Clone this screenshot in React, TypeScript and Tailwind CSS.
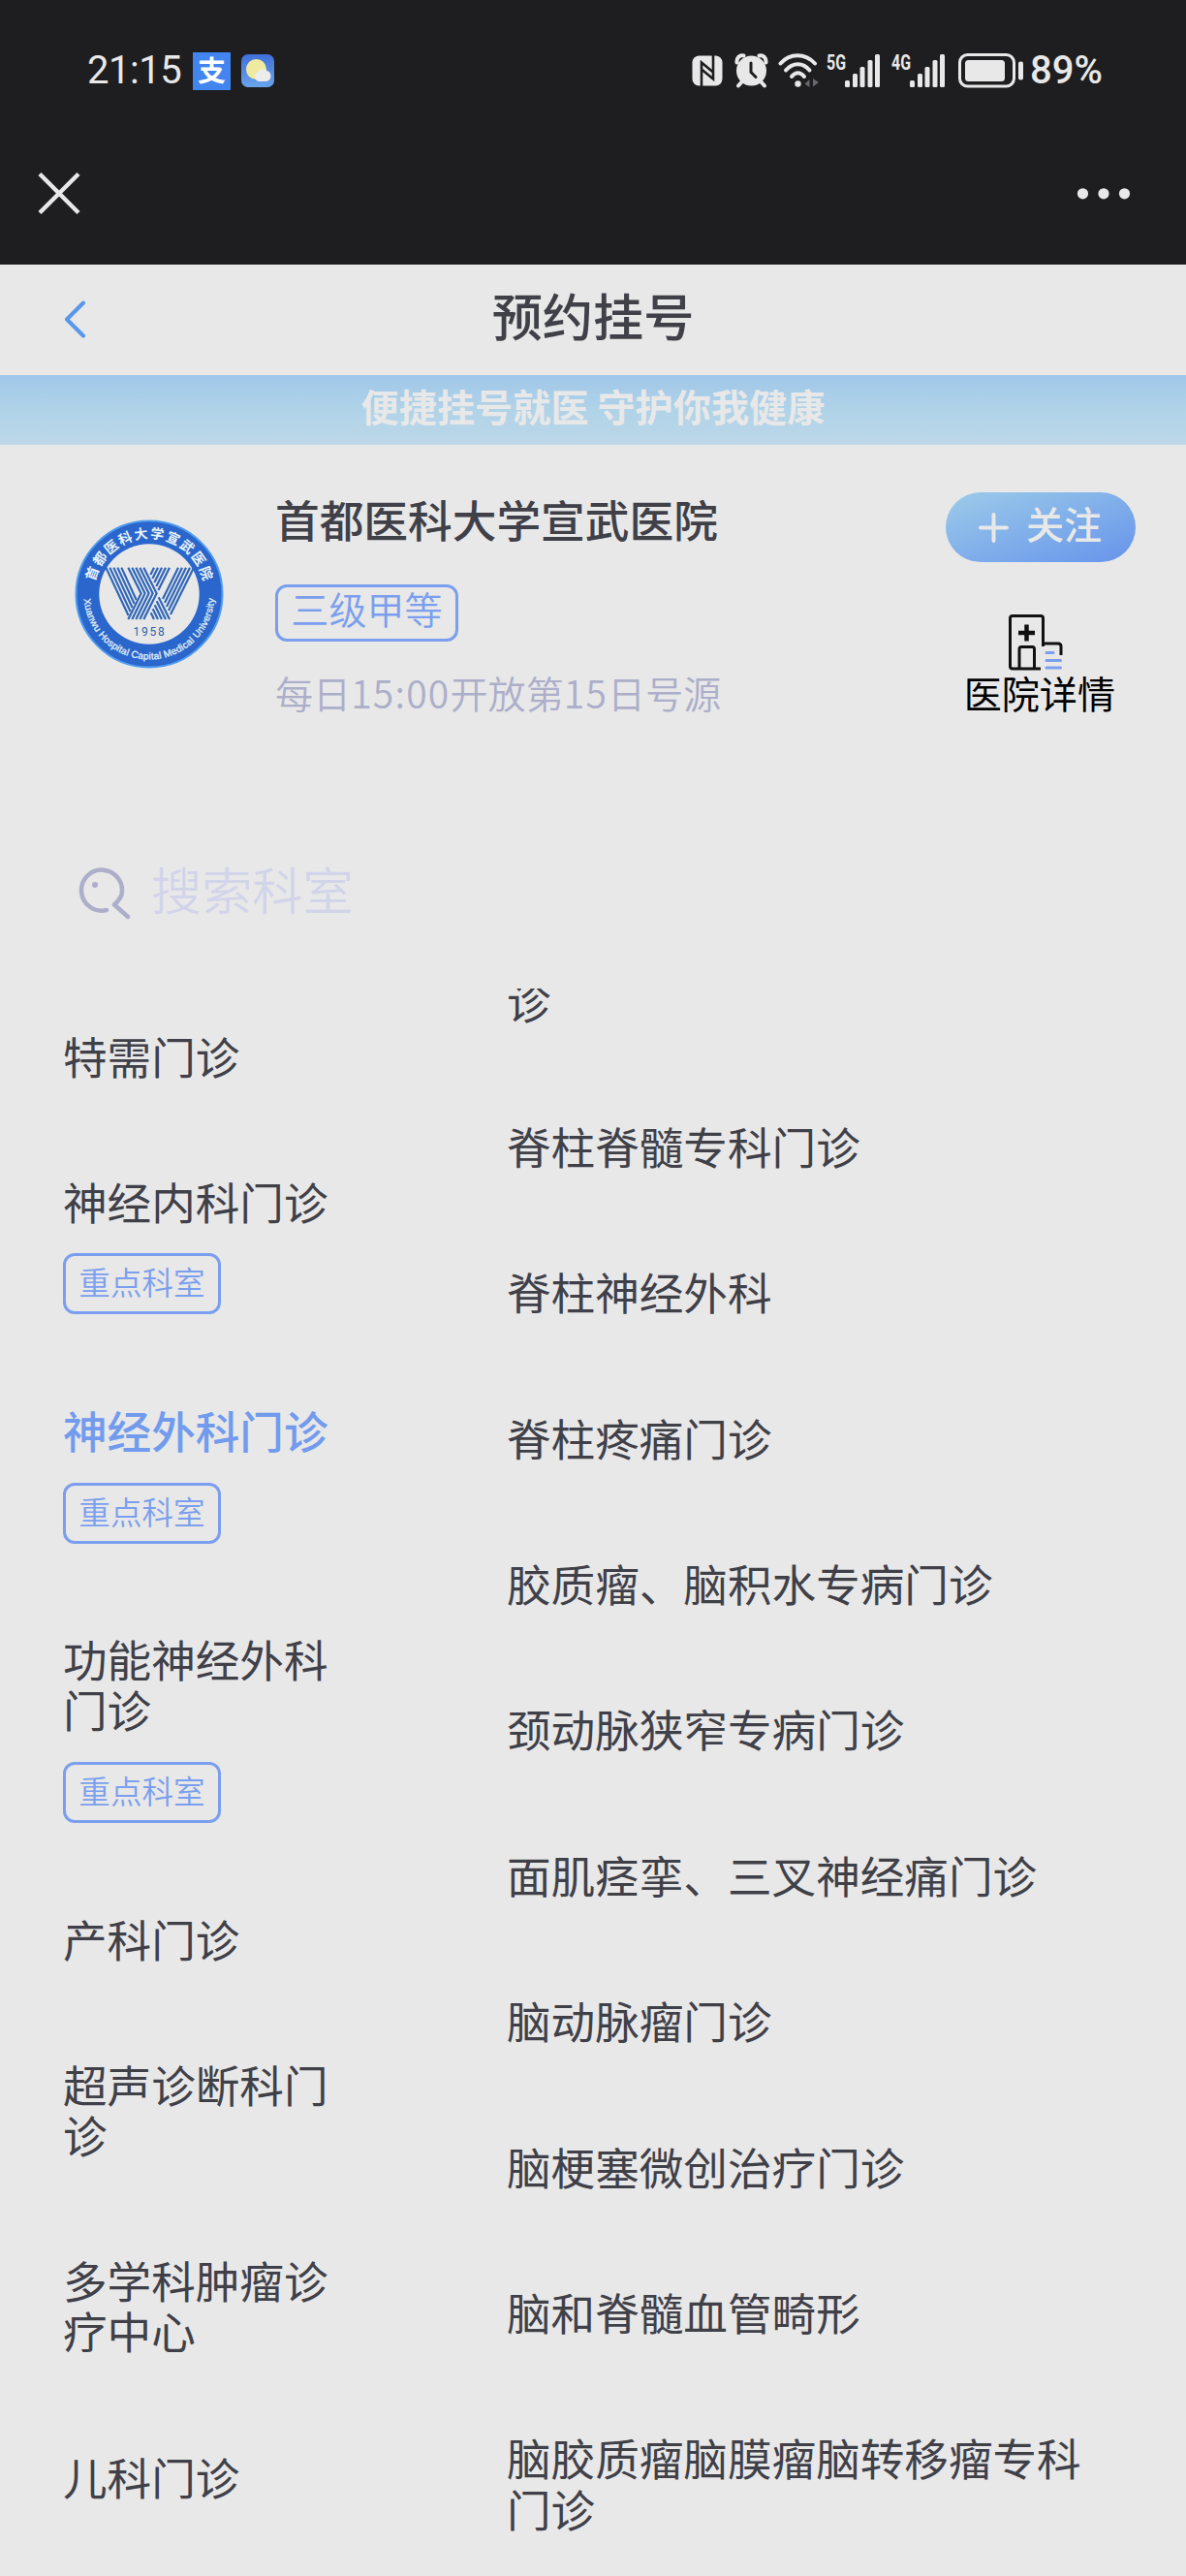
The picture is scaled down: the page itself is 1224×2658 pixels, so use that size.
import React from 'react';

interface Department {
  name: string;
  key?: boolean;
  active?: boolean;
}

const departments: Department[] = [
  { name: '特需门诊' },
  { name: '神经内科门诊', key: true },
  { name: '神经外科门诊', key: true, active: true },
  { name: '功能神经外科门诊', key: true },
  { name: '产科门诊' },
  { name: '超声诊断科门诊' },
  { name: '多学科肿瘤诊疗中心' },
  { name: '儿科门诊' },
];

const clinics = [
  '诊',
  '脊柱脊髓专科门诊',
  '脊柱神经外科',
  '脊柱疼痛门诊',
  '胶质瘤、脑积水专病门诊',
  '颈动脉狭窄专病门诊',
  '面肌痉挛、三叉神经痛门诊',
  '脑动脉瘤门诊',
  '脑梗塞微创治疗门诊',
  '脑和脊髓血管畸形',
  '脑胶质瘤脑膜瘤脑转移瘤专科门诊',
];

const Signal: React.FC<{ label: string }> = ({ label }) => (
  <svg className="overflow-visible" width="56" height="36" viewBox="0 0 56 36" fill="#e8e8e8">
    <text x="0" y="16.5" fontSize="22" fontWeight="700" fontFamily="Roboto, sans-serif" textLength="20" lengthAdjust="spacingAndGlyphs">
      {label}
    </text>
    <rect x="19" y="28" width="5" height="7" rx="1.5" />
    <rect x="27" y="21" width="5" height="14" rx="1.5" />
    <rect x="34.5" y="14" width="5" height="21" rx="1.5" />
    <rect x="42.5" y="7" width="5" height="28" rx="1.5" />
    <rect x="50" y="1" width="5" height="34" rx="1.5" />
  </svg>
);

const StatusBar: React.FC = () => (
  <div className="flex h-[146px] items-center pl-[90px] pr-[83px] font-[Roboto,sans-serif] text-[#e8e8e8]">
    <span className="w-[109px] text-[40px] leading-none tracking-[-0.5px]">21:15</span>
    <div className="flex h-[39px] w-[39px] items-center justify-center bg-[#4285ee] pb-[3px] font-['Noto_Sans_CJK_SC',sans-serif] text-[29px] font-bold leading-none text-white">
      支
    </div>
    <svg className="ml-[10.5px]" width="34" height="34" viewBox="0 0 34 34">
      <defs>
        <linearGradient id="sky" x1="0" y1="0" x2="0" y2="1">
          <stop offset="0" stopColor="#3f6fd8" />
          <stop offset="1" stopColor="#6aa4ec" />
        </linearGradient>
      </defs>
      <rect width="34" height="34" rx="7" fill="url(#sky)" />
      <circle cx="15.5" cy="15.5" r="10.5" fill="#f0eaa0" />
      <path d="M18 28a5 5 0 0 1-1-9.5a6 6 0 0 1 9.5-1.5a5.7 5.7 0 0 1-.5 11z" fill="#ececec" />
    </svg>

    <div className="ml-auto flex items-center">
      <svg width="32" height="34" viewBox="0 0 32 34">
        <rect x="0.5" y="1.5" width="31" height="31" rx="7" fill="#e8e8e8" />
        <path d="M10 33V8.5l12 10M22 1v24.5l-12-10" fill="none" stroke="#1e1e20" strokeWidth="2.6" />
      </svg>
      <svg className="ml-[12px]" width="35" height="36" viewBox="0 0 35 36">
        <path d="M2.500 9.500C2 4.500 5.500 1.500 9.500 2.500M32.500 9.500C33 4.500 29.500 1.500 25.500 2.500" fill="none" stroke="#e8e8e8" strokeWidth="4" strokeLinecap="round" />
        <path d="M8 29l-4 4.500M27 29l4 4.500" stroke="#e8e8e8" strokeWidth="4" strokeLinecap="round" />
        <circle cx="17.5" cy="18" r="15.5" fill="#e8e8e8" />
        <path d="M17 10v9.500l5 5" fill="none" stroke="#1e1e20" strokeWidth="3" strokeLinecap="round" />
      </svg>
      <svg className="ml-[10px]" width="43" height="36" viewBox="0 0 43 36" fill="none" stroke="#e8e8e8" strokeWidth="4" strokeLinecap="round">
        <path d="M2.500 10.500C12 -0.500 28 -0.500 38 10.500" />
        <path d="M8 17.500C15 9 26 9 32.500 17.500" />
        <path d="M14 24C18 19 23 19 27 24" />
        <circle cx="20.5" cy="31.5" r="3.2" fill="#e8e8e8" stroke="none" />
        <path d="M32.500 27v8l-5-3.500zM36 26v8.500l6-4.500z" fill="#66666c" stroke="none" />
      </svg>
      <div className="ml-[7px] flex gap-[11px]">
        <Signal label="5G" />
        <Signal label="4G" />
      </div>
      <svg className="ml-[13px]" width="68" height="36" viewBox="0 0 68 36">
        <rect x="1.5" y="1.5" width="56" height="32.5" rx="8" fill="none" stroke="#e8e8e8" strokeWidth="3" />
        <rect x="7" y="7" width="41" height="22" rx="3.5" fill="#e8e8e8" />
        <rect x="62" y="8.5" width="5" height="19" rx="2" fill="#e8e8e8" />
      </svg>
      <span className="ml-[6px] w-[78px] whitespace-nowrap text-[40px] font-medium leading-none">89%</span>
    </div>
  </div>
);

const WebHeader: React.FC = () => (
  <div className="flex h-[127px] items-start justify-between pl-[38px] pr-[57px] pt-[31px]">
    <svg width="46" height="46" viewBox="0 0 46 46" stroke="#e8e8e8" strokeWidth="4.5">
      <path d="M3 2.500l40 40M43 2.500l-40 40" />
    </svg>
    <svg width="56" height="46" viewBox="0 0 56 46" fill="#e8e8e8">
      <circle cx="6.5" cy="22.8" r="5.6" />
      <circle cx="28" cy="22.8" r="5.6" />
      <circle cx="49.5" cy="22.8" r="5.6" />
    </svg>
  </div>
);

// Five parallel stripes make up each arm of the W
const stripes = [0, 1, 2, 3, 4];

const HospitalLogo: React.FC = () => (
  <svg width="154" height="154" viewBox="-77 -77 154 154">
    <circle r="75.5" fill="#2a66cc" stroke="#4f9bf0" strokeWidth="2" />
    <circle r="51.7" fill="#e8e8e8" />
    <defs>
      <path id="ringBottom" d="M-67.500 0A67.500 67.500 0 0 0 67.500 0" />
    </defs>
    {'首都医科大学宣武医院'.split('').map((char, i) => (
      <text
        key={i}
        y="-57.5"
        textAnchor="middle"
        transform={`rotate(${-70 + i * 15.55})`}
        fontSize="14"
        fontWeight="700"
        fontFamily="'Noto Sans CJK SC', sans-serif"
        fill="#e8f2f8"
      >
        {char}
      </text>
    ))}
    <text fontSize="10" fontFamily="'Liberation Sans', sans-serif" fill="#e0f0f6" stroke="#e0f0f6" strokeWidth="0.3">
      <textPath href="#ringBottom" startOffset="5" textLength="202">
        Xuanwu Hospital Capital Medical University
      </textPath>
    </text>
    <g transform="translate(-94 -93) scale(0.3333)" fill="none" stroke="#2f66b8" strokeWidth="6.5">
      {stripes.map((k) => (
        <React.Fragment key={k}>
          <path d={`M${148 + k * 12} 197l${(142 - k * 12) * 0.49} ${148 - k * 12}`} />
          <path d={`M${217 + k * 12} 197l40 80l-40 80`} />
          <path d={`M${297 + k * 12} 197l${-(11 + k * 6)} ${22 + k * 12}`} />
          <path d={`M${287 + k * 6} ${337 - k * 12}L${297 + k * 12} 357`} />
          <path d={`M${372 + k * 12} 197l${-(48 + k * 6)} ${97 + k * 12}`} />
        </React.Fragment>
      ))}
    </g>
    <text x="0.5" y="42.5" textAnchor="middle" fontSize="12" letterSpacing="1.8" fontFamily="Roboto, sans-serif" fill="#2f5fa8">
      1958
    </text>
  </svg>
);

const HospitalCard: React.FC = () => (
  <section className="flex h-[391px] pl-[77px] pr-[52px]">
    <div className="pt-[77px]">
      <HospitalLogo />
    </div>
    <div className="ml-[53px] flex flex-col items-start pt-[49px]">
      <h2 className="text-[45.7px] font-medium leading-[54px]">首都医科大学宣武医院</h2>
      <span className="mt-[41px] flex h-[59px] w-[189px] justify-center rounded-[12px] border-3 border-[#7b9fee] text-[39.1px] font-[350] leading-[42px] text-[#7b9fee]">
        三级甲等
      </span>
      <p className="mt-[28px] text-[39.1px] font-[350] leading-[48px] text-[#acaeca]">
        每日<span className="tracking-[1.2px]">15:00</span>开放第<span className="tracking-[1.2px]">15</span>日号源
      </p>
    </div>
    <div className="ml-auto flex flex-col items-end pt-[49px]">
      <button className="flex h-[72px] w-[196px] items-center rounded-full bg-linear-to-br from-[#9dcbe9] to-[#6793ea] pl-[34px] text-[#e8e8e8]">
        <svg width="31" height="31" viewBox="0 0 31 31" stroke="#e8e8e8" strokeWidth="4" strokeLinecap="round">
          <path d="M15.500 2v27M2 15.500h27" />
        </svg>
        <span className="ml-[18px] pb-[8px] text-[39.1px] font-medium leading-none">关注</span>
      </button>
      <div className="mr-[21px] mt-[53px] flex flex-col items-center text-black">
        <svg className="mr-[8px]" width="57" height="60" viewBox="0 0 57 60" fill="none" stroke="#111" strokeWidth="3">
          <path d="M34 57H5Q2.500 57 2.500 54.500V5Q2.500 2.500 5 2.500H34Q36.500 2.500 36.500 5V34" />
          <path d="M12 56V37Q12 34.500 14 34.500H25.500Q27.500 34.500 27.500 37V56" />
          <path d="M36.500 31H52Q55 31 55 34V43" />
          <path d="M19.500 11.500v17M11 20h17" strokeWidth="4.5" />
          <path d="M40 40.500h7M40 48.500h14.500M40 56h14.500" stroke="#7b9fee" strokeLinecap="round" />
        </svg>
        <span className="mt-[-2px] text-[39.1px] leading-[46px]">医院详情</span>
      </div>
    </div>
  </section>
);

const SearchBar: React.FC = () => (
  <div className="flex h-[170px] items-start pl-[80px] pt-[43px]">
    <svg width="56" height="56" viewBox="0 0 56 56" fill="none" stroke="#acaeca" strokeWidth="4.5" strokeLinecap="round" strokeLinejoin="round">
      <path d="M30 46A21 21 0 1 1 45.500 30Q44 35 38 40.500L52 53" />
      <circle cx="18" cy="20" r="3" fill="#acaeca" stroke="none" />
    </svg>
    <span className="ml-[20px] mt-[-7px] text-[52.2px] font-[350] leading-[60px] text-[#d2d4ea]">搜索科室</span>
  </div>
);

const KeyTag: React.FC = () => (
  <span className="mb-[-5.5px] mt-[28.5px] flex h-[63px] w-[163px] justify-center rounded-[12px] border-3 border-[#7b9fee] text-[32.6px] font-[350] leading-[51px] text-[#7b9fee]">
    重点科室
  </span>
);

export default function App() {
  return (
    <div className="flex h-[2658px] w-[1224px] flex-col overflow-hidden bg-[#e8e8e8] font-['Noto_Sans_CJK_SC',sans-serif] text-[#404048]">
      <div className="h-[273px] shrink-0 bg-[#1e1e20]">
        <StatusBar />
        <WebHeader />
      </div>

      <header className="grid h-[114px] shrink-0 grid-cols-[1fr_auto_1fr] items-center">
        <svg className="ml-[66px]" width="24" height="40" viewBox="0 0 24 40" fill="none" stroke="#5797ea" strokeWidth="4" strokeLinecap="round" strokeLinejoin="round">
          <path d="M20 2.500L3 19.500L20 36.500" />
        </svg>
        <h1 className="pb-[12px] text-[52.2px] font-medium leading-[60px]">预约挂号</h1>
      </header>

      <div className="h-[72px] shrink-0 bg-linear-to-b from-[#a0c7e9] via-[#b0d3e8] to-[#bdd7e8] text-center text-[39.17px] font-bold leading-[62px] text-[#e8e8e8]">
        便捷挂号就医 守护你我健康
      </div>

      <HospitalCard />
      <SearchBar />

      <div className="flex min-h-0 flex-1 overflow-hidden">
        <nav className="w-[458px] pl-[65px] pt-[42.5px]">
          {departments.map((dept) => (
            <div key={dept.name} className="w-[290px] pb-[98px]">
              <div className={`text-[45.6px] leading-[52.2px] ${dept.active ? 'font-medium text-[#729bee]' : ''}`}>
                {dept.name}
              </div>
              {dept.key && <KeyTag />}
            </div>
          ))}
        </nav>
        <ul className="mt-[-14.5px] ml-[65px] w-[620px]">
          {clinics.map((clinic) => (
            <li key={clinic} className="pb-[98.2px] text-[45.6px] leading-[52.2px]">
              {clinic}
            </li>
          ))}
        </ul>
      </div>
    </div>
  );
}
